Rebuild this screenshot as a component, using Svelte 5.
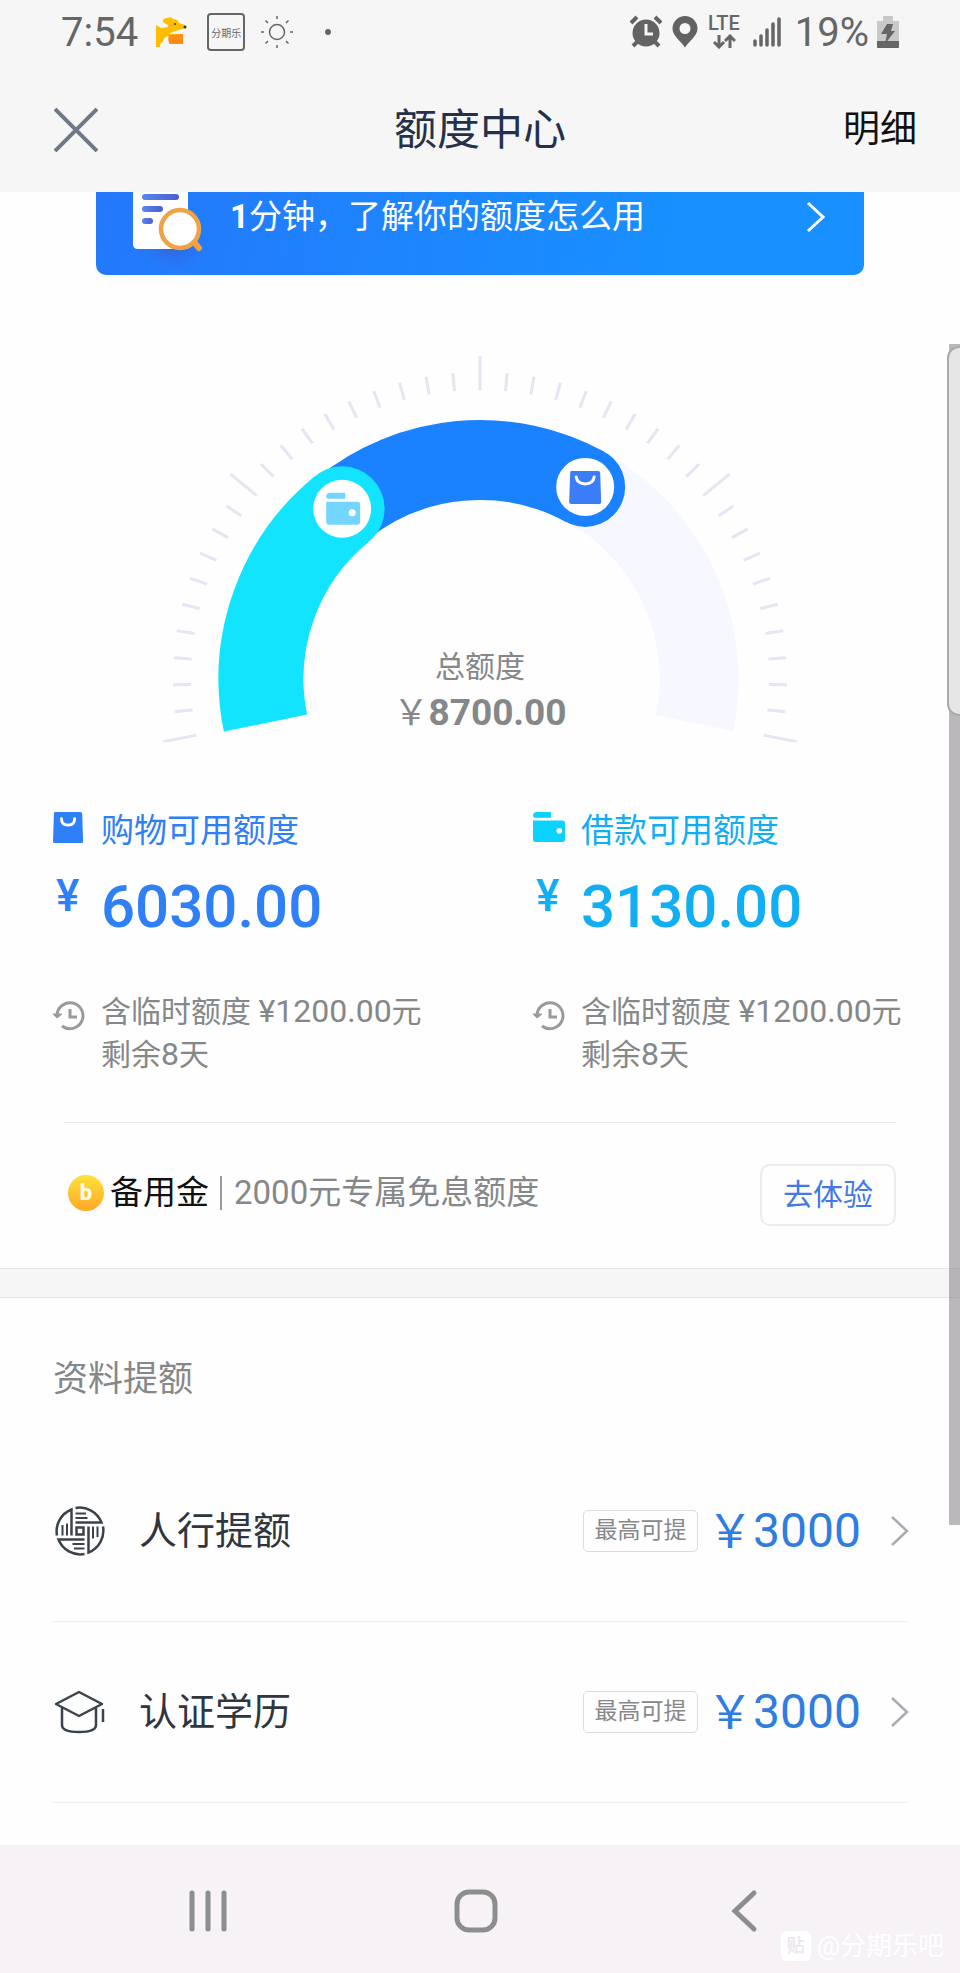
<script>
  const CX = 320;
  const CY = 339;
  const R = 219;

  function point(r, deg) {
    const a = (deg * Math.PI) / 180;
    return [CX + r * Math.cos(a), CY - r * Math.sin(a)];
  }

  function arc(from, to) {
    const [x1, y1] = point(R, from);
    const [x2, y2] = point(R, to);
    const large = Math.abs(from - to) > 180 ? 1 : 0;
    return `M${x1} ${y1}A${R} ${R} 0 ${large} 1 ${x2} ${y2}`;
  }

  const ticks = Array.from({ length: 41 }, (_, i) => {
    const deg = 191.2 - i * 5.06;
    const [x1, y1] = point(289, deg);
    const [x2, y2] = point(i % 10 === 0 ? 323 : 307, deg);
    return { x1, y1, x2, y2 };
  });

  const [loanX, loanY] = point(R, 129);
  const [shopX, shopY] = point(R, 61.3);

  const credits = [
    { kind: 'shop', title: '购物可用额度', amount: '6030.00' },
    { kind: 'loan', title: '借款可用额度', amount: '3130.00' }
  ];

  const raises = [
    { icon: 'bank', name: '人行提额', amount: '3000' },
    { icon: 'degree', name: '认证学历', amount: '3000' }
  ];
</script>

{#snippet bag()}
  <path d="M2 0h27q2 0 2 2l1 29q0 2-2 2H2q-2 0-2-2L1 2q0-2 1-2z" fill="currentColor" />
{/snippet}

{#snippet wallet()}
  <path d="M4 0h15v6H2q-2 0-2-2q0-4 4-4zM0 9h31q3 0 3 3v17q0 3-3 3H3q-3 0-3-3z" fill="currentColor" />
{/snippet}

<div class="page">
  <header>
    <div class="status">
      <span class="clock">7:54</span>
      <svg class="dog" width="32" height="32" viewBox="0 0 32 32" aria-hidden="true">
        <path d="M1 9l5 3l7-1q1-2-2-3L8 6q-1-3 3-4l2 0q3-2 5 1q5 0 6 4l6 2q1 3-2 4l-8 2q-5 2-6 3h12v10H14v-8q-5 0-6 6q-3 0-3 5H1z" fill="#ffbd00" />
        <path d="M14 19l14-1v10H15q-3-4-1-9z" fill="#ff8c14" />
        <circle cx="30" cy="11" r="1.5" fill="#333" /><circle cx="20" cy="8" r="1" fill="#333" />
      </svg>
      <span class="app-badge">分期乐</span>
      <svg class="sun" width="34" height="34" viewBox="0 0 34 34" fill="none" stroke="#666" stroke-width="1.5" aria-hidden="true">
        <circle cx="17" cy="17" r="7.5" />
        <path d="M17 1v3M17 30v3M1 17h3M30 17h3M5.500 5.500l2.500 2.500M26 26l2.500 2.500M5.500 28.500l2.500-2.500M26 8l2.500-2.500" />
      </svg>
      <span class="dot"></span>
      <span class="grow"></span>
      <svg width="34" height="34" viewBox="0 0 34 34" aria-hidden="true">
        <circle cx="17" cy="18" r="13.500" fill="#636363" />
        <path d="M2 8l6-6M32 8l-6-6M8 27l-4 4M26 27l4 4" stroke="#636363" stroke-width="4" />
        <path d="M17 9v10h7" fill="none" stroke="#f6f6f6" stroke-width="3" />
      </svg>
      <svg class="pin" width="26" height="34" viewBox="0 0 26 34" aria-hidden="true">
        <path fill-rule="evenodd" d="M13 1a12.500 12.500 0 0 1 12.500 12.500C25.500 21 18 25 13 32.500C8 25 .5 21 .5 13.500A12.500 12.500 0 0 1 13 1zm0 7a5.500 5.500 0 1 0 0 11a5.500 5.500 0 0 0 0-11z" fill="#636363" />
      </svg>
      <span class="lte">
        LTE
        <svg width="24" height="15" viewBox="0 0 24 15" fill="none" stroke="#666" stroke-width="3" aria-hidden="true">
          <path d="M7 1v11M2 8l5 5l5-5M18 14V3M13 7l5-5l5 5" />
        </svg>
      </span>
      <svg class="signal" width="28" height="32" viewBox="0 0 28 32" stroke="#666" stroke-width="3.500" stroke-linecap="round" aria-hidden="true">
        <path d="M2 29v-4M8 29v-9M14 29V14M20 29V8M26 29V3" />
      </svg>
      <span class="percent">19%</span>
      <svg width="22" height="34" viewBox="0 0 22 34" aria-hidden="true">
        <path d="M6 1h10v5h6v26q0 1-1 1H1q-1 0-1-1V6h6z" fill="#c9c9c9" />
        <path d="M0 26h22v6q0 1-1 1H1q-1 0-1-1z" fill="#666" />
        <path d="M10 9h6l-2 7h4L8 29l2-10H4z" fill="#666" />
      </svg>
    </div>
    <div class="titlebar">
      <button class="close" aria-label="关闭">
        <svg width="44" height="44" viewBox="0 0 44 44" stroke="#707887" stroke-width="4" aria-hidden="true"><path d="M1 1l42 42M43 1L1 43" /></svg>
      </button>
      <h1>额度中心</h1>
      <a class="detail" href="#detail">明细</a>
    </div>
  </header>

  <main>
    <a class="banner" href="#guide">
      <svg width="86" height="82" viewBox="0 0 86 82" aria-hidden="true">
        <defs>
          <radialGradient id="shade"><stop offset="0" stop-color="#3a5fd0" stop-opacity=".9" /><stop offset="1" stop-color="#2478fc" stop-opacity="0" /></radialGradient>
          <linearGradient id="line"><stop offset="0" stop-color="#5b86ee" /><stop offset="1" stop-color="#4a5fd0" /></linearGradient>
        </defs>
        <ellipse cx="45" cy="54" rx="40" ry="28" fill="url(#shade)" />
        <path d="M5 0h55v57H10q-5 0-5-5z" fill="#fff" />
        <rect x="14" y="2" width="37" height="6" rx="3" fill="url(#line)" />
        <rect x="14" y="14" width="21" height="6" rx="3" fill="url(#line)" />
        <rect x="14" y="26" width="11" height="6" rx="3" fill="url(#line)" />
        <path d="M66 50l5 6" stroke="#f0a040" stroke-width="6" stroke-linecap="round" />
        <circle cx="52" cy="37" r="19" fill="#fff" stroke="#f0a345" stroke-width="4.500" />
      </svg>
      <span class="banner-text"><b>1</b>分钟，了解你的额度怎么用</span>
      <svg class="banner-arrow" width="20" height="32" viewBox="0 0 20 32" fill="none" stroke="#fff" stroke-width="3" aria-hidden="true"><path d="M2 2l15 14L2 30" /></svg>
    </a>

    <section class="gauge">
      <svg width="640" height="402" viewBox="0 0 640 402" aria-hidden="true">
        <g stroke="#e4e6f3" stroke-width="3">
          {#each ticks as t}
            <line x1={t.x1} y1={t.y1} x2={t.x2} y2={t.y2} />
          {/each}
        </g>
        <g fill="none">
          <path d={arc(100, -11.6)} stroke="#f6f7ff" stroke-width="79" />
          <path d={arc(129, 61.3)} stroke="#1a82ff" stroke-width="80" />
          <path d={arc(191.6, 129)} stroke="#12e4ff" stroke-width="85" />
        </g>
        <circle cx={shopX} cy={shopY} r="40" fill="#1a82ff" />
        <circle cx={loanX} cy={loanY} r="42.500" fill="#12e4ff" />
        <g transform="translate({shopX} {shopY})" color="#3b7df8">
          <circle r="29" fill="#fff" />
          <g transform="translate(-16 -16)">{@render bag()}<path d="M7 6q1 7 9 7t9-7" fill="none" stroke="#fff" stroke-width="3" stroke-linecap="round" /></g>
        </g>
        <g transform="translate({loanX} {loanY})" color="#74d6ff">
          <circle r="29" fill="#fff" />
          <g transform="translate(-16 -16)">{@render wallet()}<circle cx="26" cy="20" r="3.500" fill="#fff" /></g>
        </g>
      </svg>
      <div class="total">
        <span>总额度</span>
        <strong><i>￥</i>8700.00</strong>
      </div>
    </section>

    <section class="credits">
      {#each credits as c}
        <article class={c.kind}>
          <svg class="kind-icon" width="32" height="34" viewBox="0 -1 34 36" aria-hidden="true">
            {#if c.kind === 'shop'}
              {@render bag()}<path d="M9 7q0 7 7 7t7-7" fill="none" stroke="#fff" stroke-width="3" stroke-linecap="round" />
            {:else}
              {@render wallet()}<circle cx="28" cy="20" r="3" fill="#fff" />
            {/if}
          </svg>
          <h2>{c.title}</h2>
          <span class="yen">¥</span>
          <strong class="amount">{c.amount}</strong>
          <svg class="history" width="32" height="32" viewBox="0 0 32 32" fill="none" stroke="#9a9a9e" stroke-width="3" aria-hidden="true">
            <path d="M4 16A13 13 0 1 1 9 26" /><path d="M17 9v8h7" />
            <path d="M0 14l4 4l5-4z" fill="#9a9a9e" stroke-width="1" />
          </svg>
          <p>含临时额度 <span class="num">¥1200.00</span>元<br />剩余<span class="num">8</span>天</p>
        </article>
      {/each}
    </section>

    <section class="reserve">
      <div class="reserve-info">
        <span class="coin">b</span>
        <span class="reserve-name">备用金</span>
        <span class="bar"></span>
        <span class="reserve-note">2000元专属免息额度</span>
      </div>
      <button class="try">去体验</button>
    </section>

    <section class="raise">
      <h3>资料提额</h3>
      {#each raises as r}
        <a class="row" href="#{r.icon}">
          {#if r.icon === 'bank'}
            <svg width="52" height="50" viewBox="-1 0 52 50" fill="none" stroke="#3c424c" stroke-width="2.500" aria-hidden="true">
              {#each [0, 90, 180, 270] as turn}
                <g transform="rotate({turn} 26 25)">
                  <path d="M21.500 2A23.500 23.500 0 0 1 47.500 16.500H21.500" />
                  <path d="M21.500 7.500h10.500M21.500 12h12" stroke-width="2" />
                </g>
              {/each}
              <rect x="22.500" y="21.500" width="7" height="7" />
            </svg>
          {:else}
            <svg width="52" height="50" viewBox="-1 0 52 50" fill="none" stroke="#3c424c" stroke-width="2.500" stroke-linejoin="round" aria-hidden="true">
              <path d="M2 17L25 5L48 17L25 29zM8 21v17q0 7 17 7t17-7V21M49 22v13" />
            </svg>
          {/if}
          <span class="row-name">{r.name}</span>
          <span class="tag">最高可提</span>
          <span class="row-amount"><i>￥</i>{r.amount}</span>
          <svg class="row-arrow" width="20" height="32" viewBox="0 0 20 32" fill="none" stroke="#a9abb5" stroke-width="2.500" aria-hidden="true"><path d="M2 2l15 14L2 30" /></svg>
        </a>
      {/each}
    </section>
  </main>

  <nav>
    <button aria-label="最近任务"><svg width="44" height="44" viewBox="0 0 44 44" stroke="#8c8e8d" stroke-width="5" stroke-linecap="round"><path d="M6 4v36M22 4v36M38 4v36" /></svg></button>
    <button aria-label="主页"><svg width="44" height="44" viewBox="0 0 44 44" fill="none" stroke="#8c8e8d" stroke-width="5"><rect x="3" y="3" width="38" height="38" rx="12" /></svg></button>
    <button aria-label="返回"><svg width="44" height="44" viewBox="0 0 44 44" fill="none" stroke="#8c8e8d" stroke-width="5" stroke-linecap="round"><path d="M32 4L13 22L32 40" /></svg></button>
    <span class="mark"><span class="mark-icon">贴</span>@分期乐吧</span>
  </nav>

  <div class="track"></div>
  <div class="thumb"></div>
</div>

<style>
  :global(body) { margin: 0; }
  .page {
    position: relative;
    display: flex;
    flex-direction: column;
    min-height: 100vh;
    overflow: hidden;
    background: #fefefe;
    color: #858789;
    font-family: Roboto, "Noto Sans CJK SC", sans-serif;
  }
  svg { display: block; flex: none; }
  h1, h2, h3, p { margin: 0; font-weight: 400; }
  a { color: inherit; text-decoration: none; }
  i { font-style: normal; font-weight: 400; }
  button { padding: 0; border: 0; background: none; font: inherit; }
  .grow { flex: 1; }

  header { height: 192px; background: #f6f6f6; }
  .status { display: flex; align-items: center; height: 64px; padding: 0 61px; color: #666; }
  .clock { font-size: 40px; }
  .dog { margin-left: 17px; }
  .app-badge {
    display: grid;
    place-items: center;
    box-sizing: border-box;
    width: 38px;
    height: 38px;
    margin-left: 20px;
    border: 2px solid #666;
    border-radius: 4px;
    font-size: 10px;
    font-weight: 400;
  }
  .sun { margin-left: 15px; }
  .dot { width: 6px; height: 6px; margin-left: 31px; border-radius: 50%; background: #666; }
  .pin { margin-left: 9px; }
  .lte {
    display: flex;
    flex-direction: column;
    align-items: center;
    gap: 2px;
    margin-left: 10px;
    font-size: 20px;
    font-weight: 500;
    line-height: 17px;
  }
  .signal { margin-left: 13px; }
  .percent { margin: 0 8px 0 14px; font-size: 40px; }

  .titlebar {
    display: grid;
    grid-template-columns: 1fr auto 1fr;
    align-items: center;
    box-sizing: border-box;
    height: 128px;
    padding: 4px 43px 0;
  }
  .close { justify-self: start; margin-left: 11px; }
  h1 { color: #25314a; font-size: 43px; line-height: 60px; }
  .detail { justify-self: end; color: #111; font-size: 37px; line-height: 60px; }

  .banner {
    display: flex;
    align-items: flex-start;
    height: 83px;
    margin: 0 10%;
    padding: 0 38px 0 32px;
    overflow: hidden;
    border-radius: 0 0 10px 10px;
    background: linear-gradient(100deg, #2478fc, #1890ff 75%);
    color: #fff;
  }
  .banner-text { flex: 1; margin-left: 16px; font-size: 33px; line-height: 50px; }
  .banner-arrow { margin-top: 9px; }

  .gauge { display: grid; justify-items: center; margin-top: 65px; }
  .gauge > * { grid-area: 1 / 1; }
  .total { display: flex; flex-direction: column; align-items: center; align-self: end; padding-bottom: 4px; }
  .total span { font-size: 30px; line-height: 44px; }
  .total strong { font-size: 37px; line-height: 48px; }
  .total i { font-size: 35px; }

  .credits { display: grid; grid-template-columns: 1fr 1fr; margin-top: 64px; }
  article { display: grid; grid-template-columns: 48px 1fr; padding-left: 53px; }
  .shop { color: #2f7ff7; }
  .loan { color: #12aef3; }
  .loan .kind-icon { color: #0cd2ff; }
  .kind-icon { margin-top: 5px; }
  h2 { font-size: 33px; line-height: 50px; }
  .yen { margin: 10px 0 0 3px; font-size: 44px; font-weight: 500; line-height: 60px; }
  .amount { margin-top: 14px; font-size: 60px; font-weight: 500; line-height: 74px; }
  .history { margin-top: 56px; }
  article p { margin-top: 46px; color: #858789; font-size: 30px; line-height: 43px; white-space: nowrap; }
  .num { font-size: 32px; }

  .reserve {
    display: flex;
    align-items: center;
    justify-content: space-between;
    height: 143px;
    margin: 46px 64px 2px;
    border-top: 1px solid #ebebeb;
  }
  .reserve-info { display: flex; align-items: center; padding-bottom: 4px; line-height: 50px; }
  .coin {
    width: 36px;
    height: 36px;
    margin-left: 4px;
    border-radius: 50%;
    background: linear-gradient(#ffe23a, #ffa726);
    color: #fffbe8;
    font-size: 22px;
    font-weight: 900;
    line-height: 36px;
    text-align: center;
  }
  .reserve-name { margin-left: 6px; color: #111; font-size: 33px; }
  .bar { width: 2px; height: 34px; margin: 0 12px 0 11px; background: #999; }
  .reserve-note { font-size: 33px; }
  .try {
    box-sizing: border-box;
    width: 136px;
    height: 62px;
    border: 2px solid #ececec;
    border-radius: 10px;
    color: #4278e8;
    font-size: 30px;
    line-height: 58px;
  }

  .raise { padding: 0 53px; }
  .raise::before {
    content: "";
    display: block;
    height: 28px;
    margin: 0 -53px 55px;
    border: solid #e6e6e8;
    border-width: 1px 0;
    background: #f6f6f6;
  }
  h3 { margin-bottom: 34px; font-size: 35px; line-height: 54px; }
  .row { display: flex; align-items: center; height: 180px; border-bottom: 1px solid #ededee; }
  .row-name { flex: 1; margin-left: 34px; color: #30363f; font-size: 38px; line-height: 60px; }
  .tag {
    box-sizing: border-box;
    width: 115px;
    height: 42px;
    border: 1px solid #dcdcdc;
    border-radius: 5px;
    font-size: 23px;
    line-height: 40px;
    text-align: center;
  }
  .row-amount { margin: 0 29px 0 9px; color: #2f7de1; font-size: 48px; line-height: 60px; }
  .row-amount i { font-size: 46px; }
  .row-arrow { margin-right: -3px; }

  nav {
    position: relative;
    display: flex;
    align-items: center;
    justify-content: center;
    gap: 224px;
    height: 128px;
    margin-top: auto;
    padding: 4px 8px 0 0;
    box-sizing: border-box;
    background: #f6f2f6;
  }
  .mark { position: absolute; right: 16px; bottom: 12px; display: flex; align-items: center; gap: 6px; color: #fff; font-size: 26px; line-height: 30px; }
  .mark-icon { width: 30px; height: 30px; border-radius: 6px; background: #fff; color: #eee8ee; font-size: 18px; font-weight: 700; text-align: center; }

  .track { position: absolute; top: 344px; right: 0; width: 11px; height: 1181px; background: rgba(120, 114, 120, .5); }
  .thumb {
    position: absolute;
    top: 346px;
    right: -2px;
    box-sizing: border-box;
    width: 15px;
    height: 370px;
    border: 2px solid #aaa;
    border-radius: 12px 0 0 12px;
    background: #e6e6e6;
  }
</style>
